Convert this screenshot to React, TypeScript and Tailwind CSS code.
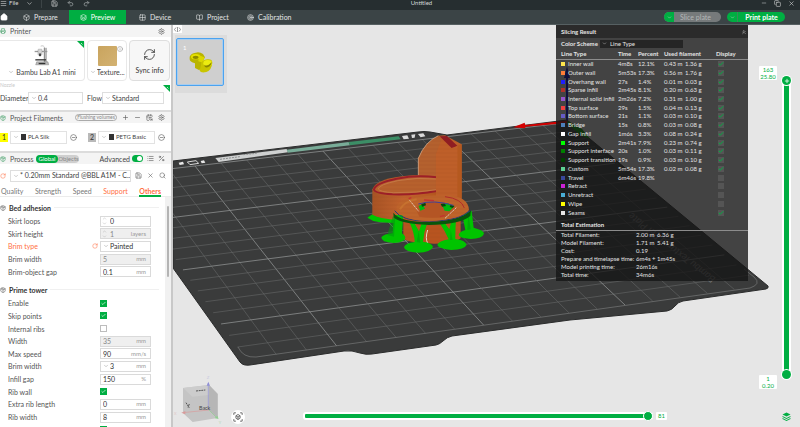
import React from "react";
import {
  Check,
  ChevronDown,
  ChevronsUp,
  CircleMinus,
  Copy,
  House,
  Info,
  Layers,
  List,
  Menu,
  Minus,
  Package,
  Plus,
  Redo2,
  RefreshCw,
  RotateCw,
  Save,
  Search,
  Settings,
  Undo2,
  X,
  Box,
  Grid2x2,
  BookOpen,
  Target,
  Percent,
  CalendarSync,
  Printer as PrinterIcon,
} from "lucide-react";

/* ---------- small controls ---------- */

function Tick({ id, label, checked }: { id: string; label?: string; checked: boolean }) {
  return (
    <span className="relative block size-[7px]">
      <input
        id={id}
        aria-label={label}
        type="checkbox"
        defaultChecked={checked}
        className="peer block size-[7px] appearance-none border border-[#bdbdbd] bg-white checked:border-[#00ae42] checked:bg-[#00ae42]"
      />
      <Check strokeWidth={3} className="pointer-events-none absolute inset-px hidden size-[5px] text-white peer-checked:block" />
    </span>
  );
}

function Dropdown({ id, label, value, className }: { id: string; label?: string; value: string; className: string }) {
  return (
    <span className={"relative flex h-3 items-center border border-[#dedede] bg-white " + className}>
      <ChevronDown className="pointer-events-none absolute left-[2px] size-[6px] text-[#999]" />
      <select id={id} aria-label={label} className="h-full w-full appearance-none bg-transparent pl-[9px] leading-none outline-none">
        <option>{value}</option>
      </select>
    </span>
  );
}

/* ---------- header ---------- */

function TitleBar() {
  return (
    <header className="flex h-[10px] shrink-0 items-center bg-[#262e30] pb-1 text-[#d5d8d8]">
      <div className="flex flex-1 items-center">
        <button className="flex items-center gap-[2px] text-[6px] leading-none">
          <Menu className="size-[7px]" />
          File
        </button>
        <ChevronDown className="ml-2 size-[7px]" />
        <span className="ml-2 h-[9px] w-px bg-[#3c4446]" />
        <button aria-label="Save" className="ml-[9px]">
          <Save className="size-[7px]" />
        </button>
        <button aria-label="Undo" className="ml-[9px] text-[#8d9495]">
          <Undo2 strokeWidth={3} className="size-[7px]" />
        </button>
        <button aria-label="Redo" className="ml-[9px] text-[#8d9495]">
          <Redo2 strokeWidth={3} className="size-[7px]" />
        </button>
      </div>
      <h1 className="ml-12 text-[6px] leading-none">Untitled</h1>
      <div className="flex flex-1 items-center justify-end gap-[7px] pr-[5px]">
        <button aria-label="Minimize">
          <Minus className="size-[6px]" />
        </button>
        <button aria-label="Restore">
          <Copy className="size-[7px]" />
        </button>
        <button aria-label="Close">
          <X className="size-[7px]" />
        </button>
      </div>
    </header>
  );
}

function NavBar() {
  const tab = "flex h-full items-center";
  return (
    <nav className="flex h-[15px] shrink-0 items-center border-b border-[#566062] bg-[#3b4446] text-[7px] leading-none text-[#e3e5e5]">
      <button aria-label="Home" className="w-[23px]">
        <House fill="white" className="size-2 text-white" />
      </button>
      <button className={tab + " w-[46px] gap-1"}>
        <Box className="size-[7px]" /> Prepare
      </button>
      <button className={tab + " w-[57px] justify-center gap-1 bg-[#00ae42] text-white"}>
        <Layers className="size-[7px]" /> Preview
      </button>
      <button className={tab + " ml-[13px] w-[57px] gap-1"}>
        <Grid2x2 className="size-[7px]" /> Device
      </button>
      <button className={tab + " w-[51px] gap-1"}>
        <BookOpen className="size-[7px]" /> Project
      </button>
      <button className={tab + " gap-1"}>
        <Target className="size-[7px]" /> Calibration
      </button>
      <div className="ml-auto mr-[15px] flex gap-[6px]">
        <div className="flex h-[10px] w-[57px] overflow-hidden rounded-full bg-[#767a7b]">
          <button aria-label="Slice options" className="flex w-[10px] items-center justify-center bg-[#00ae42]">
            <ChevronDown className="size-[5px]" />
          </button>
          <button className="flex-1 pr-1 text-[#b4b7b7]">Slice plate</button>
        </div>
        <div className="flex h-[10px] w-[58px] overflow-hidden rounded-full bg-[#00ae42]">
          <button aria-label="Print options" className="flex w-[11px] items-center justify-center border-r border-[#3b8a57]">
            <ChevronDown className="size-[5px]" />
          </button>
          <button className="flex-1 font-bold text-white">Print plate</button>
        </div>
      </div>
    </nav>
  );
}

/* ---------- sidebar ---------- */

const groupBar = "flex h-[11px] items-center bg-[#f4f4f4] text-[#555]";

function Corner() {
  return (
    <svg viewBox="0 0 7 7" className="absolute right-0 top-0 size-[7px]">
      <path d="M0 0h7v7z" fill="#00ae42" />
      <path d="M4 2l1.500 1.500" stroke="white" strokeWidth=".7" />
    </svg>
  );
}

function PrinterDrawing() {
  return (
    <svg viewBox="0 0 48 62" className="h-[21px] w-4">
      <g fill="none" stroke="#555" strokeWidth="3">
        <path d="M31 8v44M36 8v44" stroke="#777" />
        <path d="M2 19h38" stroke="#999" strokeWidth="4" />
        <path d="M20 3q10-4 12 6" stroke="#aaa" strokeWidth="2" />
      </g>
      <rect x="12" y="12" width="12" height="18" rx="2" fill="#d5d5d5" stroke="#777" />
      <rect x="15" y="25" width="6" height="8" fill="#444" />
      <path d="M4 42h32v4H4z" fill="#333" />
      <path d="M8 50h34l2 9H5z" fill="#bbb" stroke="#555" />
      <path d="M14 53h20v4H14z" fill="#333" />
    </svg>
  );
}

function PrinterPanel() {
  return (
    <section>
      <div className="flex h-3 items-center bg-[#f4f4f4] text-[#555]">
        <PrinterIcon className="size-[6px] text-[#3b9b60]" />
        <h2 className="ml-1">Printer</h2>
        <button aria-label="Printer settings" className="ml-auto mr-[6px]">
          <Settings className="size-[7px]" />
        </button>
      </div>
      <div className="mt-[3px] flex h-[41px] gap-[2px] pr-px">
        <div className="relative flex w-[86px] flex-col items-center rounded-r-sm border border-l-0 border-[#e8e8e8] pt-1">
          <Corner />
          <PrinterDrawing />
          <label className="relative mt-[2px] flex items-center">
            <ChevronDown className="absolute left-0 size-[6px] text-[#999]" />
            <select aria-label="Printer model" className="appearance-none pl-2 text-[#444] outline-none">
              <option>Bambu Lab A1 mini</option>
            </select>
          </label>
        </div>
        <div className="relative flex w-10 flex-col items-center rounded-sm border border-[#e8e8e8] pt-[5px]">
          <Info className="absolute right-[3px] top-[5px] size-[6px] text-[#888]" />
          <span className="h-5 w-[19px] rounded-[1px] bg-linear-to-br from-[#c9a45e] to-[#d3b272]" />
          <label className="relative mt-[2px] flex items-center">
            <ChevronDown className="absolute left-0 size-[6px] text-[#999]" />
            <select aria-label="Plate type" className="appearance-none pl-[7px] text-[#444] outline-none">
              <option>Texture...</option>
            </select>
          </label>
        </div>
        <button className="flex w-[41px] flex-col items-center justify-center gap-[5px] rounded-sm border border-[#dedede] bg-[#f7f7f7] text-[#333]">
          <RefreshCw strokeWidth={1.5} className="size-[13px]" />
          Sync info
        </button>
      </div>
      <div role="group" aria-labelledby="nozzle" className="relative h-[29px] text-[#444]">
        <h3 id="nozzle" className="h-2 text-[5px] leading-[8px] text-[#c9c9c9]">
          Nozzle
        </h3>
        <span className="absolute right-px top-1 size-[7px]">
          <Corner />
        </span>
        <div className="flex items-center pt-[3px]">
          <label htmlFor="diameter" className="w-7">
            Diameter
          </label>
          <Dropdown id="diameter" value="0.4" className="w-[55px]" />
          <label htmlFor="flow" className="ml-1 w-[15px]">
            Flow
          </label>
          <Dropdown id="flow" value="Standard" className="w-[62px]" />
        </div>
      </div>
    </section>
  );
}

function Filament({ n, name, swatch }: { n: number; name: string; swatch: string }) {
  return (
    <div className="flex items-center">
      <span className={"flex h-[9px] w-2 items-center justify-center text-[#333] " + swatch}>{n}</span>
      <span className="relative ml-[2px] flex h-[13px] w-[57px] items-center border border-[#e2e2e2]">
        <ChevronDown className="absolute left-[2px] size-[6px] text-[#999]" />
        <span className="absolute left-[10px] h-[6px] w-[5px] bg-[#333]" />
        <select aria-label={"Filament " + n} className="w-full appearance-none bg-transparent pl-[17px] text-[6px] text-[#444] outline-none">
          <option>{name}</option>
        </select>
      </span>
      <button aria-label={"Edit filament " + n} className="ml-[3px]">
        <CircleMinus className="size-[7px] text-[#555]" />
      </button>
    </div>
  );
}

function FilamentPanel() {
  return (
    <section className="border-t-2 border-[#dcdcdc]">
      <div className={groupBar}>
        <Package className="size-[6px] text-[#3b9b60]" />
        <h2 className="ml-1">Project Filaments</h2>
        <div className="ml-auto mr-[6px] flex items-center gap-[5px]">
          <button className="h-[7px] w-[42px] rounded-full border border-[#aaa] text-[5px] leading-none text-[#888]">Flushing volumes</button>
          <button aria-label="Add filament">
            <Plus className="size-[7px]" />
          </button>
          <button aria-label="Remove filament">
            <Minus className="size-[7px]" />
          </button>
          <button aria-label="Sync filaments">
            <CalendarSync className="size-[7px]" />
          </button>
          <button aria-label="Filament settings">
            <Settings className="size-[7px]" />
          </button>
        </div>
      </div>
      <div className="flex h-7 items-center gap-[11px]">
        <Filament n={1} name="PLA Silk" swatch="bg-[#ffff00]" />
        <Filament n={2} name="PETG Basic" swatch="bg-[#b9b9b9]" />
      </div>
    </section>
  );
}

type Field = {
  name: string;
  kind: "text" | "spin" | "select" | "check";
  value?: string;
  unit?: string;
  off?: boolean;
  changed?: boolean;
  checked?: boolean;
};

const bedFields: Field[] = [
  { name: "Skirt loops", kind: "spin", value: "0" },
  { name: "Skirt height", kind: "spin", value: "1", unit: "layers", off: true },
  { name: "Brim type", kind: "select", value: "Painted", changed: true },
  { name: "Brim width", kind: "text", value: "5", unit: "mm", off: true },
  { name: "Brim-object gap", kind: "text", value: "0.1", unit: "mm" },
];

const towerFields: Field[] = [
  { name: "Enable", kind: "check", checked: true },
  { name: "Skip points", kind: "check", checked: true },
  { name: "Internal ribs", kind: "check", checked: false },
  { name: "Width", kind: "text", value: "35", unit: "mm", off: true },
  { name: "Max speed", kind: "text", value: "90", unit: "mm/s" },
  { name: "Brim width", kind: "select", value: "3", unit: "mm" },
  { name: "Infill gap", kind: "text", value: "150", unit: "%" },
  { name: "Rib wall", kind: "check", checked: true },
  { name: "Extra rib length", kind: "text", value: "0", unit: "mm" },
  { name: "Rib width", kind: "text", value: "8", unit: "mm" },
];

function FieldRow({ field, group }: { field: Field; group: string }) {
  const id = group + "-" + field.name.toLowerCase().replace(/ /g, "-");
  return (
    <div className="flex min-h-0 items-center pl-2">
      <label htmlFor={id} className={"w-[84px] " + (field.changed ? "text-[#ff6f43]" : "text-[#555]")}>
        {field.name}
      </label>
      <span className="w-2">{field.changed && <RotateCw className="size-[6px] text-[#ff6f43]" />}</span>
      {field.kind === "check" && <Tick id={id} checked={!!field.checked} />}
      {field.kind !== "check" && (
        <span className={"relative flex h-[11px] w-[51px] items-center border border-[#dadada] " + (field.off ? "bg-[#efefef] text-[#888]" : "bg-white text-[#333]")}>
          {field.kind === "spin" && (
            <span className="absolute left-px text-[#aaa]">
              <ChevronDown className="size-[5px] rotate-180" />
              <ChevronDown className="size-[5px]" />
            </span>
          )}
          {field.kind === "select" && <ChevronDown className="absolute left-[2px] size-[6px] text-[#999]" />}
          {field.kind === "select" ? (
            <select id={id} className="w-full appearance-none bg-transparent pl-[9px] outline-none">
              <option>{field.value}</option>
            </select>
          ) : (
            <input
              id={id}
              defaultValue={field.value}
              disabled={field.off}
              className={"w-full bg-transparent outline-none " + (field.kind === "spin" ? "pl-[9px]" : "pl-[2px]")}
            />
          )}
          <span className="absolute right-1 text-[6px] text-[#999]">{field.unit}</span>
        </span>
      )}
    </div>
  );
}

function SectionTitle({ children }: { children: React.ReactNode }) {
  return (
    <div className="flex h-[11px] items-center gap-[3px] pr-[6px]">
      <Package className="size-[6px] text-[#555]" />
      <h3 className="font-bold text-[#333]">{children}</h3>
      <span className="h-px flex-1 bg-[#f0f0f0]" />
    </div>
  );
}

function ProcessPanel() {
  return (
    <section className="flex min-h-0 flex-1 flex-col border-t-2 border-[#dcdcdc]">
      <div className={groupBar}>
        <Package className="size-[6px] text-[#3b9b60]" />
        <h2 className="ml-1 w-[26px]">Process</h2>
        <div className="flex h-2 w-[43px] rounded-full bg-[#cfcfcf] text-[6px] leading-none">
          <button className="w-[22px] rounded-full bg-[#00ae42] text-white">Global</button>
          <button className="flex-1 text-[#888]">Objects</button>
        </div>
        <label htmlFor="advanced" className="ml-auto text-[#444]">
          Advanced
        </label>
        <span className="relative ml-[2px] mr-1 flex items-center">
          <input id="advanced" type="checkbox" role="switch" defaultChecked className="h-[7px] w-[11px] appearance-none rounded-full bg-[#bbb] checked:bg-[#00ae42]" />
          <span className="pointer-events-none absolute right-px size-[5px] rounded-full bg-white" />
        </span>
        <button aria-label="Parameter list" className="mr-1">
          <List className="size-[7px]" />
        </button>
        <button aria-label="Compare" className="mr-[6px]">
          <Percent className="size-[7px]" />
        </button>
      </div>
      <div className="flex h-[23px] shrink-0 items-center text-[#444]">
        <button aria-label="Reset" className="w-[10px]">
          <RotateCw className="size-[6px] text-[#ff6f43]" />
        </button>
        <Dropdown id="preset" label="Process preset" value="* 0.20mm Standard @BBL A1M - C..." className="w-[121px]" />
        <div className="ml-1 flex gap-[5px] text-[#666]">
          <button aria-label="Save preset">
            <Save className="size-[7px]" />
          </button>
          <button aria-label="Delete preset">
            <X className="size-[7px]" />
          </button>
          <button aria-label="Search">
            <Search className="size-[7px]" />
          </button>
        </div>
      </div>
      <div role="tablist" className="flex h-[10px] shrink-0 items-start justify-between border-b border-[#ececec] pl-px pr-[10px] text-[#777]">
        <button role="tab">Quality</button>
        <button role="tab">Strength</button>
        <button role="tab">Speed</button>
        <button role="tab" className="text-[#ff6f43]">
          Support
        </button>
        <button role="tab" aria-selected="true" className="h-[10px] border-b-2 border-[#00ae42] font-bold text-[#ff6f43]">
          Others
        </button>
      </div>
      <div className="flex min-h-0 flex-1 overflow-hidden">
        <div className="flex-1 pt-[5px]">
          <SectionTitle>Bed adhesion</SectionTitle>
          <div className="mt-[2px] grid h-[63px] auto-rows-fr">
            {bedFields.map((f) => (
              <FieldRow key={f.name} field={f} group="bed" />
            ))}
          </div>
          <div className="mt-[6px]">
            <SectionTitle>Prime tower</SectionTitle>
          </div>
          <div className="mt-[2px] grid h-[139px] auto-rows-fr">
            {towerFields.map((f) => (
              <FieldRow key={f.name} field={f} group="tower" />
            ))}
            <div className="flex items-center pl-[100px]">
              <Tick id="tower-fillet" label="Fillet wall" checked />
            </div>
          </div>
        </div>
        <div className="w-[6px] bg-[#f1f1f1] px-[2px] pt-[9px]">
          <div className="h-[71px] rounded-full bg-[#b4b4b4]" />
        </div>
      </div>
    </section>
  );
}

/* ---------- 3D scene ---------- */

type Pt = [number, number];

/* Projects plate coordinates (0..1 on both axes) on the screen. */
function makeProjection(p0: Pt, p1: Pt, p2: Pt, p3: Pt) {
  const dx1 = p1[0] - p2[0];
  const dx2 = p3[0] - p2[0];
  const dx3 = p0[0] - p1[0] + p2[0] - p3[0];
  const dy1 = p1[1] - p2[1];
  const dy2 = p3[1] - p2[1];
  const dy3 = p0[1] - p1[1] + p2[1] - p3[1];
  const det = dx1 * dy2 - dx2 * dy1;
  const g = (dx3 * dy2 - dx2 * dy3) / det;
  const h = (dx1 * dy3 - dx3 * dy1) / det;
  return (s: number, t: number): Pt => {
    const w = g * s + h * t + 1;
    return [
      ((p1[0] - p0[0] + g * p1[0]) * s + (p3[0] - p0[0] + h * p3[0]) * t + p0[0]) / w,
      ((p1[1] - p0[1] + g * p1[1]) * s + (p3[1] - p0[1] + h * p3[1]) * t + p0[1]) / w,
    ];
  };
}

const project = makeProjection([336.7, 346], [625, 305], [446.7, 136.7], [195, 166]);
const cell = (u: number, v: number) => project(u / 10, (v + 3) / 18);
const gridSteps = Array.from({ length: 19 }, (_, i) => i - 3);

function GridLine({ a, b, bold }: { a: Pt; b: Pt; bold: boolean }) {
  return <line x1={a[0]} y1={a[1]} x2={b[0]} y2={b[1]} stroke={bold ? "#8d8f8f" : "#666868"} strokeWidth={bold ? 0.8 : 0.6} />;
}

function Model() {
  return (
    <g transform="translate(350 120) scale(.3333)">
      <defs>
        <linearGradient id="wall" x1="0" x2="1">
          <stop offset="0" stopColor="#a85424" />
          <stop offset=".5" stopColor="#c4642e" />
          <stop offset="1" stopColor="#b5591f" />
        </linearGradient>
        <pattern id="layers" width="6" height="4" patternUnits="userSpaceOnUse">
          <path d="M0 1h6" stroke="#8f431a" strokeOpacity=".35" strokeWidth="1" />
        </pattern>
      </defs>
      <path d="M52 293l20-14 20 6 60 12-20 12-42-2-20-4z" fill="#00c800" />
      <path d="M205 170V115Q225 65 265 47l20-1 50 27v170l-75 20z" fill="#c06029" />
      <path d="M205 170V115Q225 65 265 47l10 10-15 40v100z" fill="#b5622f" />
      <path d="M205 170V115Q225 65 265 47l20-1 50 27v170l-75 20z" fill="url(#layers)" />
      <path d="M205 170v-55q20-50 60-68" fill="none" stroke="#d9b79a" strokeWidth="2" />
      <path d="M269 49l22-1 31 29-15 9z" fill="#8f1d22" />
      <path d="M322 77l13-4v160l-14 5z" fill="#b5591f" />
      <path d="M67 208Q80 172 190 166q40-2 68 6v60l-30 70-90-2q-50-5-71-16z" fill="url(#wall)" />
      <path d="M67 208Q80 172 190 166q40-2 68 6v60l-30 70-90-2q-50-5-71-16z" fill="url(#layers)" />
      <path d="M260 172q-60-8-120 4-66 14-68 33 2 11 55 14 70 2 133-10" fill="#b8622e" stroke="#9c1f28" strokeWidth="6" />
      <path d="M260 177q-60-6-116 5-58 12-59 25 4 9 46 11 70 1 129-9" fill="url(#layers)" stroke="#c98350" strokeWidth="2" />
      <path d="M258 100l64-22v155l-64 20z" fill="#c06029" />
      <path d="M258 100l64-22v155l-64 20z" fill="url(#layers)" />
      <path d="M160 260h172v95q-20 16-80 16-80-2-92-16z" fill="#b9551f" />
      <path d="M160 260h172v95q-20 16-80 16-80-2-92-16z" fill="url(#layers)" />
      <path d="M233 330q-8 25 0 40" stroke="#e9d8cc" strokeWidth="3" fill="none" />
      <g fill="#00c400">
        <path d="M132 285h28l-4 55q10 6 10 12 0 16-35 17-38-2-37-17 8-10 34-12z" />
        <path d="M337 285l28-12 6 50q32 8 31 18-4 14-40 16-36-3-36-12 2-10 20-15z" />
        <path d="M178 305l15 4 14 25 8-24 17-2q-10 25-13 57 28 4 30 16-6 16-45 17-41-3-42-17 5-12 32-15 0-25-16-61z" />
        <path d="M268 308l14-2 16 22 6-25 14-6q-2 30-2 60 30 4 34 17-6 15-46 16-38-4-42-15 4-12 34-17-12-28-28-50z" />
      </g>
      <g fill="#00980f">
        <path d="M112 345l16-55 8 0-4 60zM200 366l6-33 5 35zM300 360l2-30 6 30zM352 330l3-50 7 48z" fillOpacity=".55" />
      </g>
      <path d="M130 278q20 28 105 28 100-4 128-36l-2 18q-30 26-125 27-90-4-105-23z" fill="#07560c" />
      <path d="M134 272q20 32 105 32 90-2 122-32" fill="none" stroke="#243a78" strokeWidth="3" />
      <path d="M139 264q0-26 70-34 40-4 90-4 56 6 58 44-20 28-120 34-92-4-98-40z" fill="#c0652c" />
      <path d="M139 264q0-26 70-34 40-4 90-4 56 6 58 44-20 28-120 34-92-4-98-40z" fill="url(#layers)" />
      <path d="M198 266q6-18 52-20 50-2 66 18-10 18-28 26-40 6-80 0z" fill="#b45524" />
      <path d="M206 258l12-6 7 14-14 6zM276 254l18-4 18 10-14 14-14-2z" fill="#00ba10" />
      <path d="M214 252l12-4 2 8-12 4zM272 252l12-2 4 8-12 2zM302 254l12 4-7 6-8-4z" fill="#064a0a" />
      <path d="M205 252q45-14 105 4" fill="none" stroke="#3f3f9a" strokeWidth="3" />
      <path d="M285 230q50 6 58 34" fill="none" stroke="#b02b2b" strokeWidth="3" />
      <path d="M222 240l30 2M176 236l8-3M270 290l14-4" stroke="#c33131" strokeWidth="4" />
      <path d="M178 240l28 34M285 295l34-32" stroke="#e2c5b2" strokeWidth="3" strokeDasharray="8 2" />
      <path d="M150 268q14-24 50-30" fill="none" stroke="#d08033" strokeWidth="6" strokeOpacity=".5" />
    </g>
  );
}

function Scene() {
  return (
    <svg viewBox="173 25 627 402" preserveAspectRatio="xMinYMin slice" className="absolute inset-0 h-full w-full" aria-hidden="true">
      <path
        d="M173 161L418 132Q424 131 430 132L447 135L567 120L768 286Q769 288 766 289L683 301Q678 302 675 306Q672 310 667 311L570 320L452 336Q447 337 443 341Q440 344 436 345L372 354Q366 355 360 353Q352 350 344 351L250 365Q243 366 240 362L173 268Z"
        fill="#3a3b3b"
        stroke="#2b2c2c"
        strokeWidth="1"
      />
      {gridSteps.map((i) => (
        <React.Fragment key={i}>
          {i > -3 && i < 15 && <GridLine a={cell(i, -3)} b={cell(i, 15)} bold={i % 5 === 0} />}
          {i > -3 && <GridLine a={cell(-3, i)} b={cell(15, i)} bold={i % 5 === 0} />}
        </React.Fragment>
      ))}
      <path d="M238 347Q243 358 256 357L750 288Q762 284 754 277L744 269" fill="none" stroke="#777979" strokeWidth=".7" />
      <g transform="translate(170 110) scale(.3333)">
        <path d="M26 158l13-3 3 8-13 2zM92 153l10-2 4 7-11 2z" fill="#e8e8e8" />
        <path d="M52 156l26-4 8 8-26 4z" fill="none" stroke="#d8d8d8" strokeWidth="3" />
        <path d="M136 144l214-27 4 10-208 29z" fill="#cfd1d1" />
        <path d="M150 148l60-8M220 134l40-4" stroke="#8b8d8d" strokeWidth="3" strokeDasharray="6 3" />
        <path d="M350 119l186-23 4 10-186 22z" fill="#79ac98" />
        <path d="M536 96l150-17 6 9-152 18z" fill="#3c8e66" />
        <path d="M696 78l16-2 5 10-16 2zM724 74l12-1-2 10-8 1zM744 72l16-2 6 9-14 3z" fill="#dadada" />
        <path d="M1030 52l34-14 2 7 125-13v7L1066 50v5z" fill="#d40000" />
      </g>
      <path d="M567 66l3 12h-2v42h-2V78h-2z" fill="#0000c8" />
      <path d="M568 121l14 8 8 10-10-4-13-12z" fill="#00a000" />
      <text transform="translate(716 278) rotate(218)" fontSize="10" fontStyle="italic" fill="#777">
        Bambu Textured PEI Plate
      </text>
      <Model />
      <g transform="translate(170 330) scale(.3333)">
        <path d="M39 174l78-9 26 27v72l-75 12-29-27z" fill="#c4c4c4" />
        <path d="M39 174l78-9 26 27-76 8z" fill="#cccccc" />
        <path d="M117 165l26 27v72l-26-24z" fill="#b6b6b6" />
        <path d="M39 248l78-8" stroke="#d99a9a" strokeWidth="2" />
        <path d="M115 160v80" stroke="#8f8fd6" strokeWidth="2" />
        <path d="M117 240l24 24" stroke="#90cf90" strokeWidth="2" />
        <path d="M110 167l5-12 5 12z" fill="#8f8fd6" />
        <path d="M46 243l-12 5 12 5z" fill="#d99a9a" />
        <path d="M134 264l12 3-4-10z" fill="#90cf90" />
        <text x="87" y="240" fontSize="16" fill="#444">Back</text>
        <text x="110" y="146" fontSize="13" fill="#c8c8e0">Z</text>
        <text x="12" y="256" fontSize="12" fill="#e0c8c8">X</text>
        <text x="146" y="282" fontSize="12" fill="#b5d8b5">Y</text>
        <path d="M78 183l28-3M48 218l10 16M58 222l-4 10" stroke="#555" strokeWidth="3" strokeDasharray="6 2" />
      </g>
    </svg>
  );
}

/* ---------- slicing result ---------- */

type Line = { color: string; name: string; time?: string; pct?: string; len?: string; mass?: string; on: boolean };

const lines: Line[] = [
  { color: "#ffe64d", name: "Inner wall", time: "4m8s", pct: "12.1%", len: "0.43 m", mass: "1.36 g", on: true },
  { color: "#ff7d38", name: "Outer wall", time: "5m53s", pct: "17.3%", len: "0.56 m", mass: "1.76 g", on: true },
  { color: "#1f1fff", name: "Overhang wall", time: "27s", pct: "1.4%", len: "0.01 m", mass: "0.03 g", on: true },
  { color: "#b03029", name: "Sparse infill", time: "2m45s", pct: "8.1%", len: "0.20 m", mass: "0.63 g", on: true },
  { color: "#9654cc", name: "Internal solid infill", time: "2m26s", pct: "7.2%", len: "0.31 m", mass: "1.00 g", on: true },
  { color: "#f04040", name: "Top surface", time: "29s", pct: "1.5%", len: "0.04 m", mass: "0.13 g", on: true },
  { color: "#665cc7", name: "Bottom surface", time: "21s", pct: "1.1%", len: "0.03 m", mass: "0.10 g", on: true },
  { color: "#4d80ba", name: "Bridge", time: "15s", pct: "0.8%", len: "0.03 m", mass: "0.08 g", on: true },
  { color: "#ffffff", name: "Gap infill", time: "1m6s", pct: "3.3%", len: "0.08 m", mass: "0.24 g", on: true },
  { color: "#00ff00", name: "Support", time: "2m41s", pct: "7.9%", len: "0.23 m", mass: "0.74 g", on: true },
  { color: "#008000", name: "Support interface", time: "20s", pct: "1.0%", len: "0.03 m", mass: "0.11 g", on: true },
  { color: "#004000", name: "Support transition", time: "19s", pct: "0.9%", len: "0.03 m", mass: "0.10 g", on: true },
  { color: "#5ed194", name: "Custom", time: "5m54s", pct: "17.3%", len: "0.02 m", mass: "0.08 g", on: true },
  { color: "#38489b", name: "Travel", time: "6m46s", pct: "19.8%", on: false },
  { color: "#cd22d6", name: "Retract", on: false },
  { color: "#49add6", name: "Unretract", on: false },
  { color: "#ffff00", name: "Wipe", on: false },
  { color: "#e6e6e6", name: "Seams", on: true },
];

const totals = [
  ["Total Filament:", "2.00 m", "6.36 g"],
  ["Model Filament:", "1.71 m", "5.41 g"],
  ["Cost:", "0.19", ""],
  ["Prepare and timelapse time:", "6m4s + 1m45s", ""],
  ["Model printing time:", "26m16s", ""],
  ["Total time:", "34m6s", ""],
];

function SlicingResult() {
  return (
    <aside className="absolute right-[52px] top-0 w-48 bg-[#141414]/78 pb-[2px] text-[6px] leading-none text-[#e4e4e4]">
      <div className="flex h-[13px] items-center justify-between bg-[#1c1c1c]/60 pl-[5px] pr-px">
        <h2 className="font-bold">Slicing Result</h2>
        <button aria-label="Collapse">
          <ChevronsUp className="size-[6px]" />
        </button>
      </div>
      <div className="flex h-[11px] items-center pl-[5px]">
        <label htmlFor="scheme" className="w-[39px] font-bold">
          Color Scheme
        </label>
        <span className="relative flex h-2 w-[83px] items-center bg-[#1e1e1e]/80">
          <ChevronDown className="pointer-events-none absolute left-[2px] size-[5px]" />
          <select id="scheme" className="w-full appearance-none bg-transparent pl-[10px] outline-none">
            <option>Line Type</option>
          </select>
        </span>
      </div>
      <table className="h-[168px] w-full table-fixed border-collapse text-left">
        <colgroup>
          <col className="w-3" />
          <col className="w-[50px]" />
          <col className="w-5" />
          <col className="w-[26px]" />
          <col className="w-[21px]" />
          <col className="w-[31px]" />
          <col />
        </colgroup>
        <thead>
          <tr className="h-[10px] border-b border-[#8c8c8c]">
            <th colSpan={2} className="p-0 pl-[5px]">
              Line Type
            </th>
            <th className="p-0">Time</th>
            <th className="p-0">Percent</th>
            <th colSpan={2} className="p-0">
              Used filament
            </th>
            <th className="p-0">Display</th>
          </tr>
        </thead>
        <tbody>
          {lines.map((l) => (
            <tr key={l.name}>
              <td className="p-0 pl-[5px]">
                <span className="block size-1" style={{ backgroundColor: l.color }} />
              </td>
              <td className="whitespace-nowrap p-0">{l.name}</td>
              <td className="p-0">{l.time}</td>
              <td className="p-0">{l.pct}</td>
              <td className="whitespace-nowrap p-0">{l.len}</td>
              <td className="p-0">{l.mass}</td>
              <td className="p-0">
                <span className="relative ml-[2px] block size-[6px]">
                  <input type="checkbox" aria-label={"Display " + l.name} defaultChecked={l.on} className="peer block size-[6px] appearance-none bg-[#555]" />
                  <Check strokeWidth={4} className="pointer-events-none absolute inset-0 hidden size-[6px] text-[#00ae42] peer-checked:block" />
                </span>
              </td>
            </tr>
          ))}
        </tbody>
      </table>
      <h3 className="mt-[3px] flex h-[11px] items-center border-b border-[#8c8c8c] pl-[5px] font-bold">Total Estimation</h3>
      <dl>
        {totals.map(([k, a, b]) => (
          <div key={k} className="flex h-2 items-center whitespace-nowrap pl-[5px]">
            <dt className="w-[75px]">{k}</dt>
            <dd className={b ? "w-[21px]" : ""}>{a}</dd>
            <dd>{b}</dd>
          </div>
        ))}
      </dl>
    </aside>
  );
}

/* ---------- viewport ---------- */

function PlateThumb() {
  return (
    <div className="absolute left-[2px] top-[10px] h-[58px] w-[52px] bg-[#dcdcdc] pl-px pt-[3px]">
      <button aria-label="Plate 1" className="relative h-12 w-12 rounded-[2px] border border-[#4ba3f0] bg-[#cfcfcf] ring-1 ring-inset ring-[#a9cdee]">
        <span className="absolute left-[6px] top-[6px] text-[6px] leading-none text-white">1</span>
        <svg viewBox="0 0 72 66" className="absolute left-3 top-[13px] h-[22px] w-6">
          <path d="M2 14Q6 4 20 2q12-3 22 4l6 10-8 14v20l-10 4-12-6V34Q2 30 2 22z" fill="#b9b400" />
          <ellipse cx="20" cy="14" rx="14" ry="8" fill="#e6e200" />
          <ellipse cx="20" cy="16" rx="9" ry="5" fill="#8f8b00" />
          <path d="M30 10l16 6-4 16-14-4z" fill="#dcd800" />
          <path d="M36 40q-2-14 18-18 16-2 16 10-2 22-18 28-16 4-20-4z" fill="#c9c500" />
          <ellipse cx="56" cy="34" rx="13" ry="10" fill="#ecec10" />
          <path d="M46 38q8 8 22-8 0 12-12 16-10 2-10-8z" fill="#8c8800" />
        </svg>
      </button>
    </div>
  );
}

const bubble = "rounded-[1px] bg-white text-center text-[6px] leading-[7px] text-[#00ae42]";

function LayerSlider() {
  return (
    <div className="absolute bottom-[48px] right-[9px] top-[51px] w-[9px]">
      <div className="absolute inset-x-0 inset-y-1 border-x-2 border-white bg-[#00ae42]" />
      <span className="absolute left-0 top-0 flex size-[9px] items-center justify-center rounded-full bg-[#00ae42] text-white ring-1 ring-white">
        <Plus strokeWidth={3} className="size-[6px]" />
      </span>
      <span className="absolute bottom-0 left-0 size-[9px] rounded-full bg-[#00ae42] ring-1 ring-white" />
      <output className={bubble + " absolute -top-[10px] right-[14px] w-[18px]"}>
        163
        <br />
        25.80
      </output>
      <output className={bubble + " absolute -bottom-[10px] right-[14px] w-[18px]"}>
        1
        <br />
        0.20
      </output>
      <input type="range" aria-label="Layer" min={1} max={163} defaultValue={163} className="absolute inset-0 h-full w-full opacity-0 [writing-mode:vertical-lr]" />
    </div>
  );
}

function MoveSlider() {
  return (
    <div className="absolute bottom-[6px] left-[130px] right-[147px] h-[10px]">
      <div className="absolute inset-x-0 top-px h-2 rounded-[3px] border-2 border-white bg-[#00ae42]" />
      <span className="absolute right-0 top-0 size-[10px] rounded-full border border-white bg-[#00ae42]" />
      <output className={bubble + " absolute -right-[14px] top-px h-2 w-[11px]"}>81</output>
      <input type="range" aria-label="Move" min={0} max={81} defaultValue={81} className="absolute inset-0 h-full w-full opacity-0" />
    </div>
  );
}

function Viewport() {
  return (
    <main className="relative min-w-0 flex-1 overflow-hidden bg-[#e6e6e6]">
      <Scene />
      <button aria-label="Fold sidebar" className="absolute left-0 top-0 flex h-2 w-[9px] items-center justify-center bg-white text-[#777]">
        <svg viewBox="0 0 14 10" className="h-[5px] w-[7px]" fill="none" stroke="currentColor" strokeWidth="1.500">
          <path d="M4 1L1 5l3 4M10 1l3 4-3 4M7 0v10" />
        </svg>
      </button>
      <PlateThumb />
      <SlicingResult />
      <LayerSlider />
      <MoveSlider />
      <button aria-label="Fit view" className="absolute bottom-[3px] left-[58px] flex size-[14px] items-center justify-center rounded-full bg-white text-[#555]">
        <svg viewBox="0 0 24 24" className="size-[10px]" fill="none" stroke="currentColor" strokeWidth="2">
          <path d="M2 7V2h5M17 2h5v5M22 17v5h-5M7 22H2v-5" />
          <path d="M12 6l5 3v6l-5 3-5-3V9zM7 9l5 3 5-3M12 12v6" />
        </svg>
      </button>
      <button aria-label="Layers" className="absolute bottom-[6px] right-[9px] text-[#00ae42]">
        <svg viewBox="0 0 18 18" className="size-[9px]" fill="currentColor">
          <path d="M9 1l8 4-8 4-8-4zM1 8l8 4 8-4v2l-8 4-8-4zM1 12l8 4 8-4v2l-8 4-8-4z" />
        </svg>
      </button>
    </main>
  );
}

export default function App() {
  return (
    <div className="flex h-screen flex-col overflow-hidden bg-white font-['Lato',sans-serif]">
      <TitleBar />
      <NavBar />
      <div className="flex min-h-0 flex-1">
        <div className="flex w-[173px] shrink-0 flex-col overflow-hidden border-r-2 border-[#c8c8c8] bg-white text-[7px] leading-[8px]">
          <PrinterPanel />
          <FilamentPanel />
          <ProcessPanel />
        </div>
        <Viewport />
      </div>
    </div>
  );
}
